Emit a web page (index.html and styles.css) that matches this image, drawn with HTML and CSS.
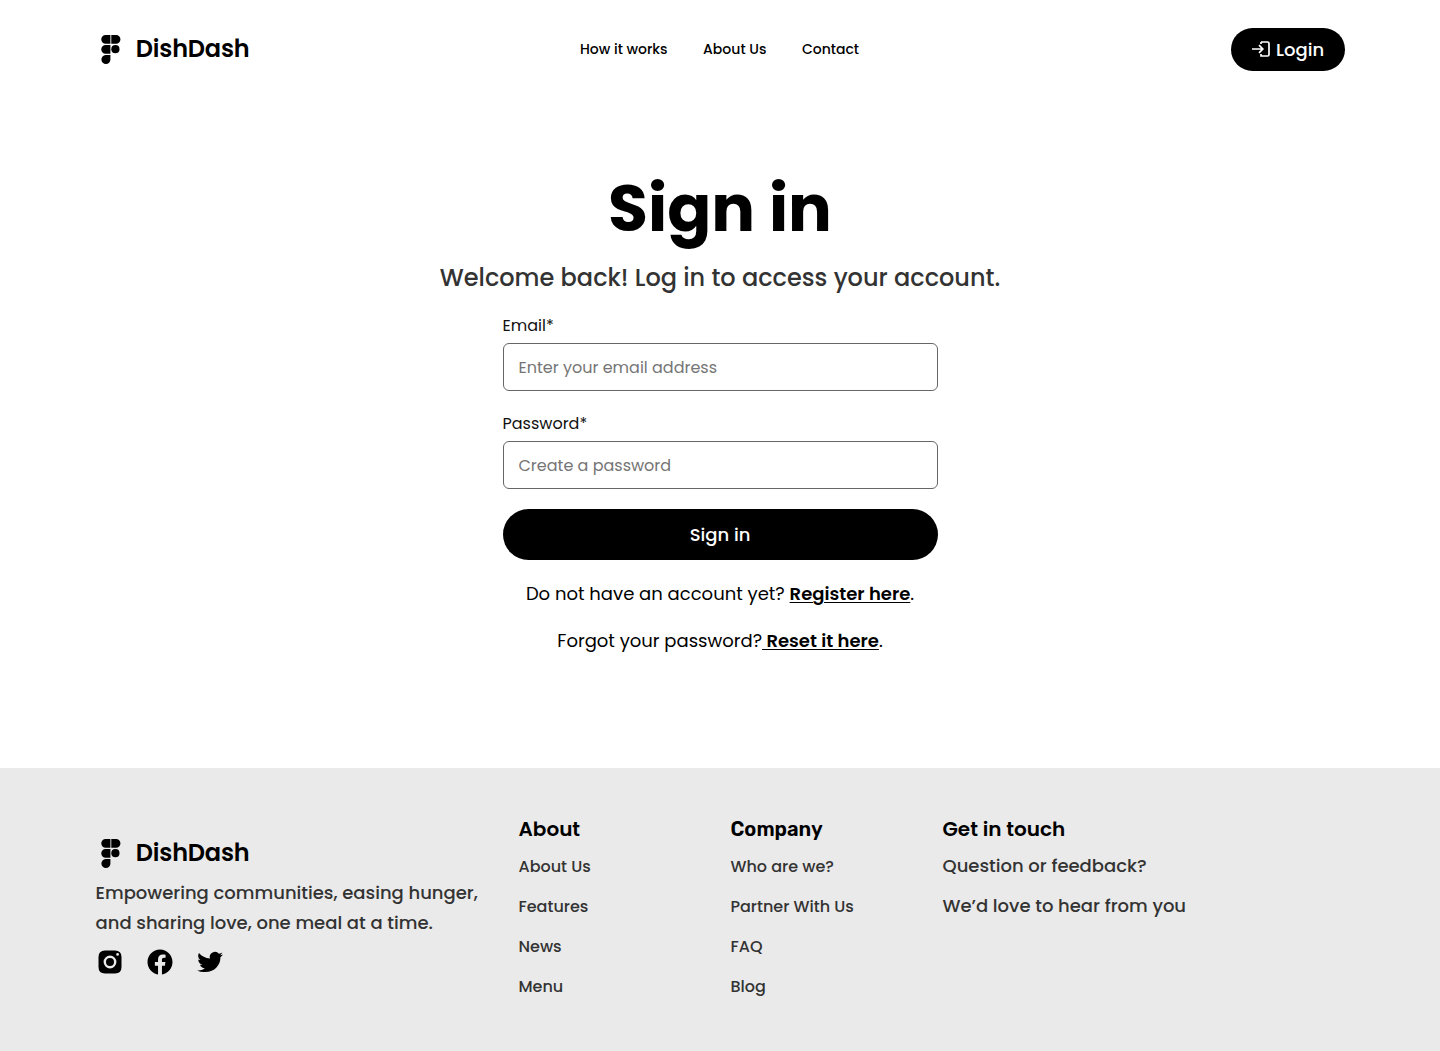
FILE: index.html
```html
<!DOCTYPE html>
<html lang="en">
<head>
<meta charset="utf-8">
<title>DishDash – Sign in</title>
<link rel="stylesheet" href="styles.css">
</head>
<body>
<svg width="0" height="0" class="sprite" aria-hidden="true">
  <symbol id="mark" viewBox="0 0 20 29">
    <path d="M4.600 0H9.400V8.700H4.600A4.350 4.350 0 0 1 4.600 0ZM10.300 0H15.100A4.350 4.350 0 0 1 15.100 8.700H10.300ZM4.600 10H9.400V18.700H4.600A4.350 4.350 0 0 1 4.600 10ZM4.600 20H9.400V24.500A4.500 4.500 0 1 1 4.600 20Z"/>
    <circle cx="14.400" cy="14.200" r="4.100"/>
  </symbol>
</svg>
<header class="header">
  <a class="logo"><svg class="logo-mark"><use href="#mark"/></svg><span>DishDash</span></a>
  <nav class="nav"><a>How it works</a><a>About Us</a><a>Contact</a></nav>
  <a class="login">
    <svg width="18" height="16" viewBox="0 0 18 16" fill="none" stroke="currentColor" stroke-width="1.700"><path d="M0 8H11M7 4.200L10.800 8L7 11.800M9 1H15.600Q17 1 17 2.400V13.600Q17 15 15.600 15H9V12.900M9 1V3.100"/></svg>
    <span>Login</span>
  </a>
</header>
<main class="main">
  <h1 class="title">Sign in</h1>
  <p class="subtitle">Welcome back! Log in to access your account.</p>
  <form class="form">
    <label class="label" for="email">Email*</label>
    <input class="input" id="email" type="email" placeholder="Enter your email address">
    <label class="label" for="password">Password*</label>
    <input class="input" id="password" type="password" placeholder="Create a password">
    <button class="submit" type="button">Sign in</button>
  </form>
  <p class="hint">Do not have an account yet? <a class="hint-link">Register here</a>.</p>
  <p class="hint">Forgot your password?<a class="hint-link"> Reset it here</a>.</p>
</main>
<footer class="footer">
  <section class="brand">
    <a class="logo"><svg class="logo-mark"><use href="#mark"/></svg><span>DishDash</span></a>
    <p class="tagline">Empowering communities, easing hunger,<br>and sharing love, one meal at a time.</p>
    <div class="social">
      <svg width="30" height="30" viewBox="0 0 30 30"><path fill-rule="evenodd" d="M10 3.500H20Q26.500 3.500 26.500 10V20Q26.500 26.500 20 26.500H10Q3.500 26.500 3.500 20V10Q3.500 3.500 10 3.500ZM15 8.600A6.400 6.400 0 1 0 15 21.400A6.400 6.400 0 1 0 15 8.600ZM15 11A4 4 0 1 1 15 19A4 4 0 1 1 15 11ZM22.600 6A1.400 1.400 0 1 0 22.600 8.800A1.400 1.400 0 1 0 22.600 6Z"/></svg>
      <svg width="30" height="30" viewBox="0 0 30 30"><path d="M27.500 15.070C27.500 8.130 21.900 2.500 15 2.500S2.500 8.130 2.500 15.070C2.500 21.340 7.070 26.540 13.050 27.500V18.700H9.870V15.070H13.050V12.300C13.050 9.140 14.920 7.400 17.780 7.400C19.150 7.400 20.580 7.640 20.580 7.640V10.740H19C17.450 10.740 16.950 11.700 16.950 12.700V15.070H20.420L19.870 18.700H16.950V27.500C22.930 26.540 27.500 21.340 27.500 15.070Z"/></svg>
      <svg width="30" height="30" viewBox="0 0 30 30"><path d="M28 7.500C27.100 7.900 26.100 8.200 25 8.300C26 7.700 26.900 6.700 27.300 5.500C26.300 6.100 25.200 6.500 24 6.700A5.300 5.300 0 0 0 14.900 11.500C10.500 11.300 6.600 9.200 4 6C2.500 8.700 3.300 11.600 5.600 13.100C4.700 13.100 3.900 12.800 3.200 12.400C3.200 15 5 17.100 7.400 17.600C6.600 17.800 5.800 17.800 5 17.700C5.700 19.800 7.600 21.300 9.900 21.300C7.700 23 5 23.800 2.100 23.500A15 15 0 0 0 10.200 25C20 25 25.400 17.500 25.400 10.900V10.200C26.400 9.500 27.300 8.600 28 7.500Z"/></svg>
    </div>
  </section>
  <section class="column">
    <h2 class="heading">About</h2>
    <a class="link">About Us</a><a class="link">Features</a><a class="link">News</a><a class="link">Menu</a>
  </section>
  <section class="column">
    <h2 class="heading heading-alt">Company</h2>
    <a class="link">Who are we?</a><a class="link">Partner With Us</a><a class="link">FAQ</a><a class="link">Blog</a>
  </section>
  <section class="column column-contact">
    <h2 class="heading">Get in touch</h2>
    <p class="link note">Question or feedback?</p><p class="link note">We’d love to hear from you</p>
  </section>
</footer>
</body>
</html>
```
FILE: styles.css
```css
* { box-sizing: border-box; }
body { margin: 0; background: #fff; color: #000; font-family: Poppins, Inter, sans-serif; }
h1, h2, p { margin: 0; }
.sprite { display: block; }
.header { display: grid; grid-template-columns: 1fr auto 1fr; align-items: center; height: 98px; padding: 0 95px; }
.logo { display: flex; align-items: center; gap: 14.8px; height: 30px; padding-left: 6px; font-size: 24px; line-height: 28px; font-weight: 600; letter-spacing: -0.2px; }
.brand .logo { padding-left: 5.5px; }
.logo-mark { width: 20px; height: 29px; }
.nav { display: flex; gap: 35.5px; margin-right: 1px; font-size: 14px; font-weight: 500; white-space: nowrap; }
.login { justify-self: end; display: flex; align-items: center; gap: 6px; width: 114px; height: 43px; padding-left: 21px; border-radius: 22px; background: #000; color: #fff; font-size: 18px; font-weight: 500; }
.main { display: flex; flex-direction: column; align-items: center; height: 670px; padding-top: 63px; white-space: nowrap; }
.title { font-size: 65px; line-height: 96px; font-weight: 700; }
.subtitle { margin-top: 3px; font-size: 24px; line-height: 36px; font-weight: 500; color: #333; }
.form { display: flex; flex-direction: column; width: 435px; margin-top: 18px; }
.label { margin-bottom: 5px; font-size: 16px; line-height: 24px; color: #111; }
.input { width: 100%; height: 48px; margin-bottom: 21px; padding: 0 15px; border: 1px solid #666; border-radius: 6px; background: #fff; font: 16px Poppins, Inter, sans-serif; }
.input::placeholder { color: #757575; }
.submit { height: 51px; margin-top: -1px; border: 0; border-radius: 26px; background: #000; color: #fff; font: 500 18px Poppins, Inter, sans-serif; }
.hint { margin-top: 20px; font-size: 18px; line-height: 27px; }
.hint-link { font-weight: 600; text-decoration: underline; text-decoration-thickness: 1px; text-underline-offset: 2px; }
.footer { display: grid; grid-template-columns: 423px 212px 212px 1fr; height: 283px; padding: 48px 95px 0 95.5px; background: #eaeaea; white-space: nowrap; }
.brand { padding-top: 22px; }
.tagline { margin-top: 10px; font-size: 18px; line-height: 30px; font-weight: 500; color: #333; }
.social { display: flex; gap: 20px; margin: 9px 0 0 -0.1px; }
.column { display: flex; flex-direction: column; align-items: flex-start; }
.heading { height: 31px; font-size: 20px; line-height: 27px; font-weight: 600; }
.heading-alt { font-family: Rubik, Roboto, sans-serif; }
.link { font-size: 16px; line-height: 40px; font-weight: 500; color: #333; }
.column-contact .heading { height: 30px; }
.note { font-size: 18px; }
```
